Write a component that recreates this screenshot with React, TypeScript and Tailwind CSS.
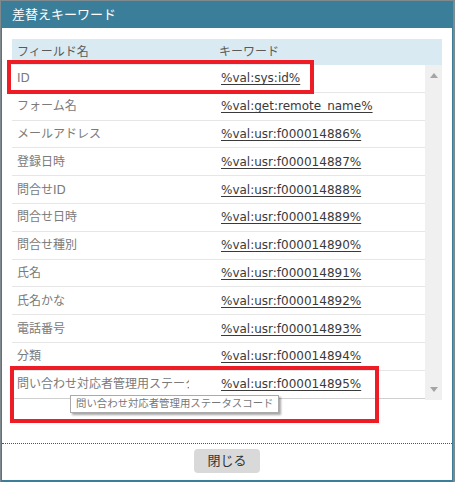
import React from "react";

const rows: [string, string][] = [
  ["ID", "%val:sys:id%"],
  ["フォーム名", "%val:get:remote_name%"],
  ["メールアドレス", "%val:usr:f000014886%"],
  ["登録日時", "%val:usr:f000014887%"],
  ["問合せID", "%val:usr:f000014888%"],
  ["問合せ日時", "%val:usr:f000014889%"],
  ["問合せ種別", "%val:usr:f000014890%"],
  ["氏名", "%val:usr:f000014891%"],
  ["氏名かな", "%val:usr:f000014892%"],
  ["電話番号", "%val:usr:f000014893%"],
  ["分類", "%val:usr:f000014894%"],
  ["問い合わせ対応者管理用ステータスコード", "%val:usr:f000014895%"],
];

const font = { fontFamily: '"DejaVu Sans", "Noto Sans CJK JP", sans-serif' };

export default function App() {
  return (
    <div className="relative w-[455px] h-[482px] border-t border-l border-r-2 border-[#7f8a8f] bg-[#3b7e99]" style={font}>
      {/* Title bar */}
      <div className="h-[27px] flex items-center pl-[11px] text-white text-[13px]">差替えキーワード</div>

      {/* Body */}
      <div className="mx-[1px] bg-white h-[452px] flex flex-col">
        <div className="mt-[11px] mx-[10px] w-[430px]">
          {/* Header */}
          <div className="h-[26px] bg-[#d9eaf2] flex items-center text-[12px] text-[#5a5a5a]">
            <div className="w-[202px] pl-[5px]">フィールド名</div>
            <div className="pl-[5px]">キーワード</div>
          </div>

          {/* Scroll area */}
          <div className="h-[335px] flex">
            <div className="w-[413px]">
              {rows.map(([name, key], i) => (
                <div
                  key={key}
                  className={`h-[27.8px] flex items-center text-[12px] border-b ${
                    i === rows.length - 1 ? "border-[#cfcfcf]" : "border-[#e6e6e6]"
                  }`}
                >
                  <div className="w-[202px] pl-[5px]">
                    <div className="w-[172px] overflow-hidden whitespace-nowrap text-[#7a7a7a]">{name}</div>
                  </div>
                  <div className="pl-[7px] text-[#3a3a3a] underline underline-offset-2">{key}</div>
                </div>
              ))}
            </div>
            <div className="w-[17px] h-[335px] bg-[#f0f0f0] flex flex-col items-center justify-between py-[8px]">
              <div className="w-0 h-0 border-l-[4px] border-r-[4px] border-b-[5px] border-l-transparent border-r-transparent border-b-[#a5a5a5]" />
              <div className="w-0 h-0 border-l-[4px] border-r-[4px] border-t-[5px] border-l-transparent border-r-transparent border-t-[#a5a5a5]" />
            </div>
          </div>
        </div>

        {/* Footer */}
        <div className="mt-[43px] border-t border-dotted border-[#555] pt-[5px] flex justify-center">
          <button className="w-[66px] h-[24px] rounded-[4px] bg-[#d9d9d9] text-[13px] text-[#333]">閉じる</button>
        </div>
      </div>

      {/* Tooltip */}
      <div className="absolute left-[69px] top-[394px] h-[18px] px-[5px] flex items-center bg-white border border-[#aaa] text-[10.4px] text-[#777] shadow-[2px_2px_2px_rgba(0,0,0,0.35)] whitespace-nowrap">
        問い合わせ対応者管理用ステータスコード
      </div>

      {/* Annotation boxes */}
      <div className="absolute left-[6px] top-[59px] w-[307px] h-[34px] border-[4px] border-[#ee1c25]" />
      <div className="absolute left-[9px] top-[365px] w-[369px] h-[57px] border-[4px] border-[#ee1c25]" />
    </div>
  );
}
